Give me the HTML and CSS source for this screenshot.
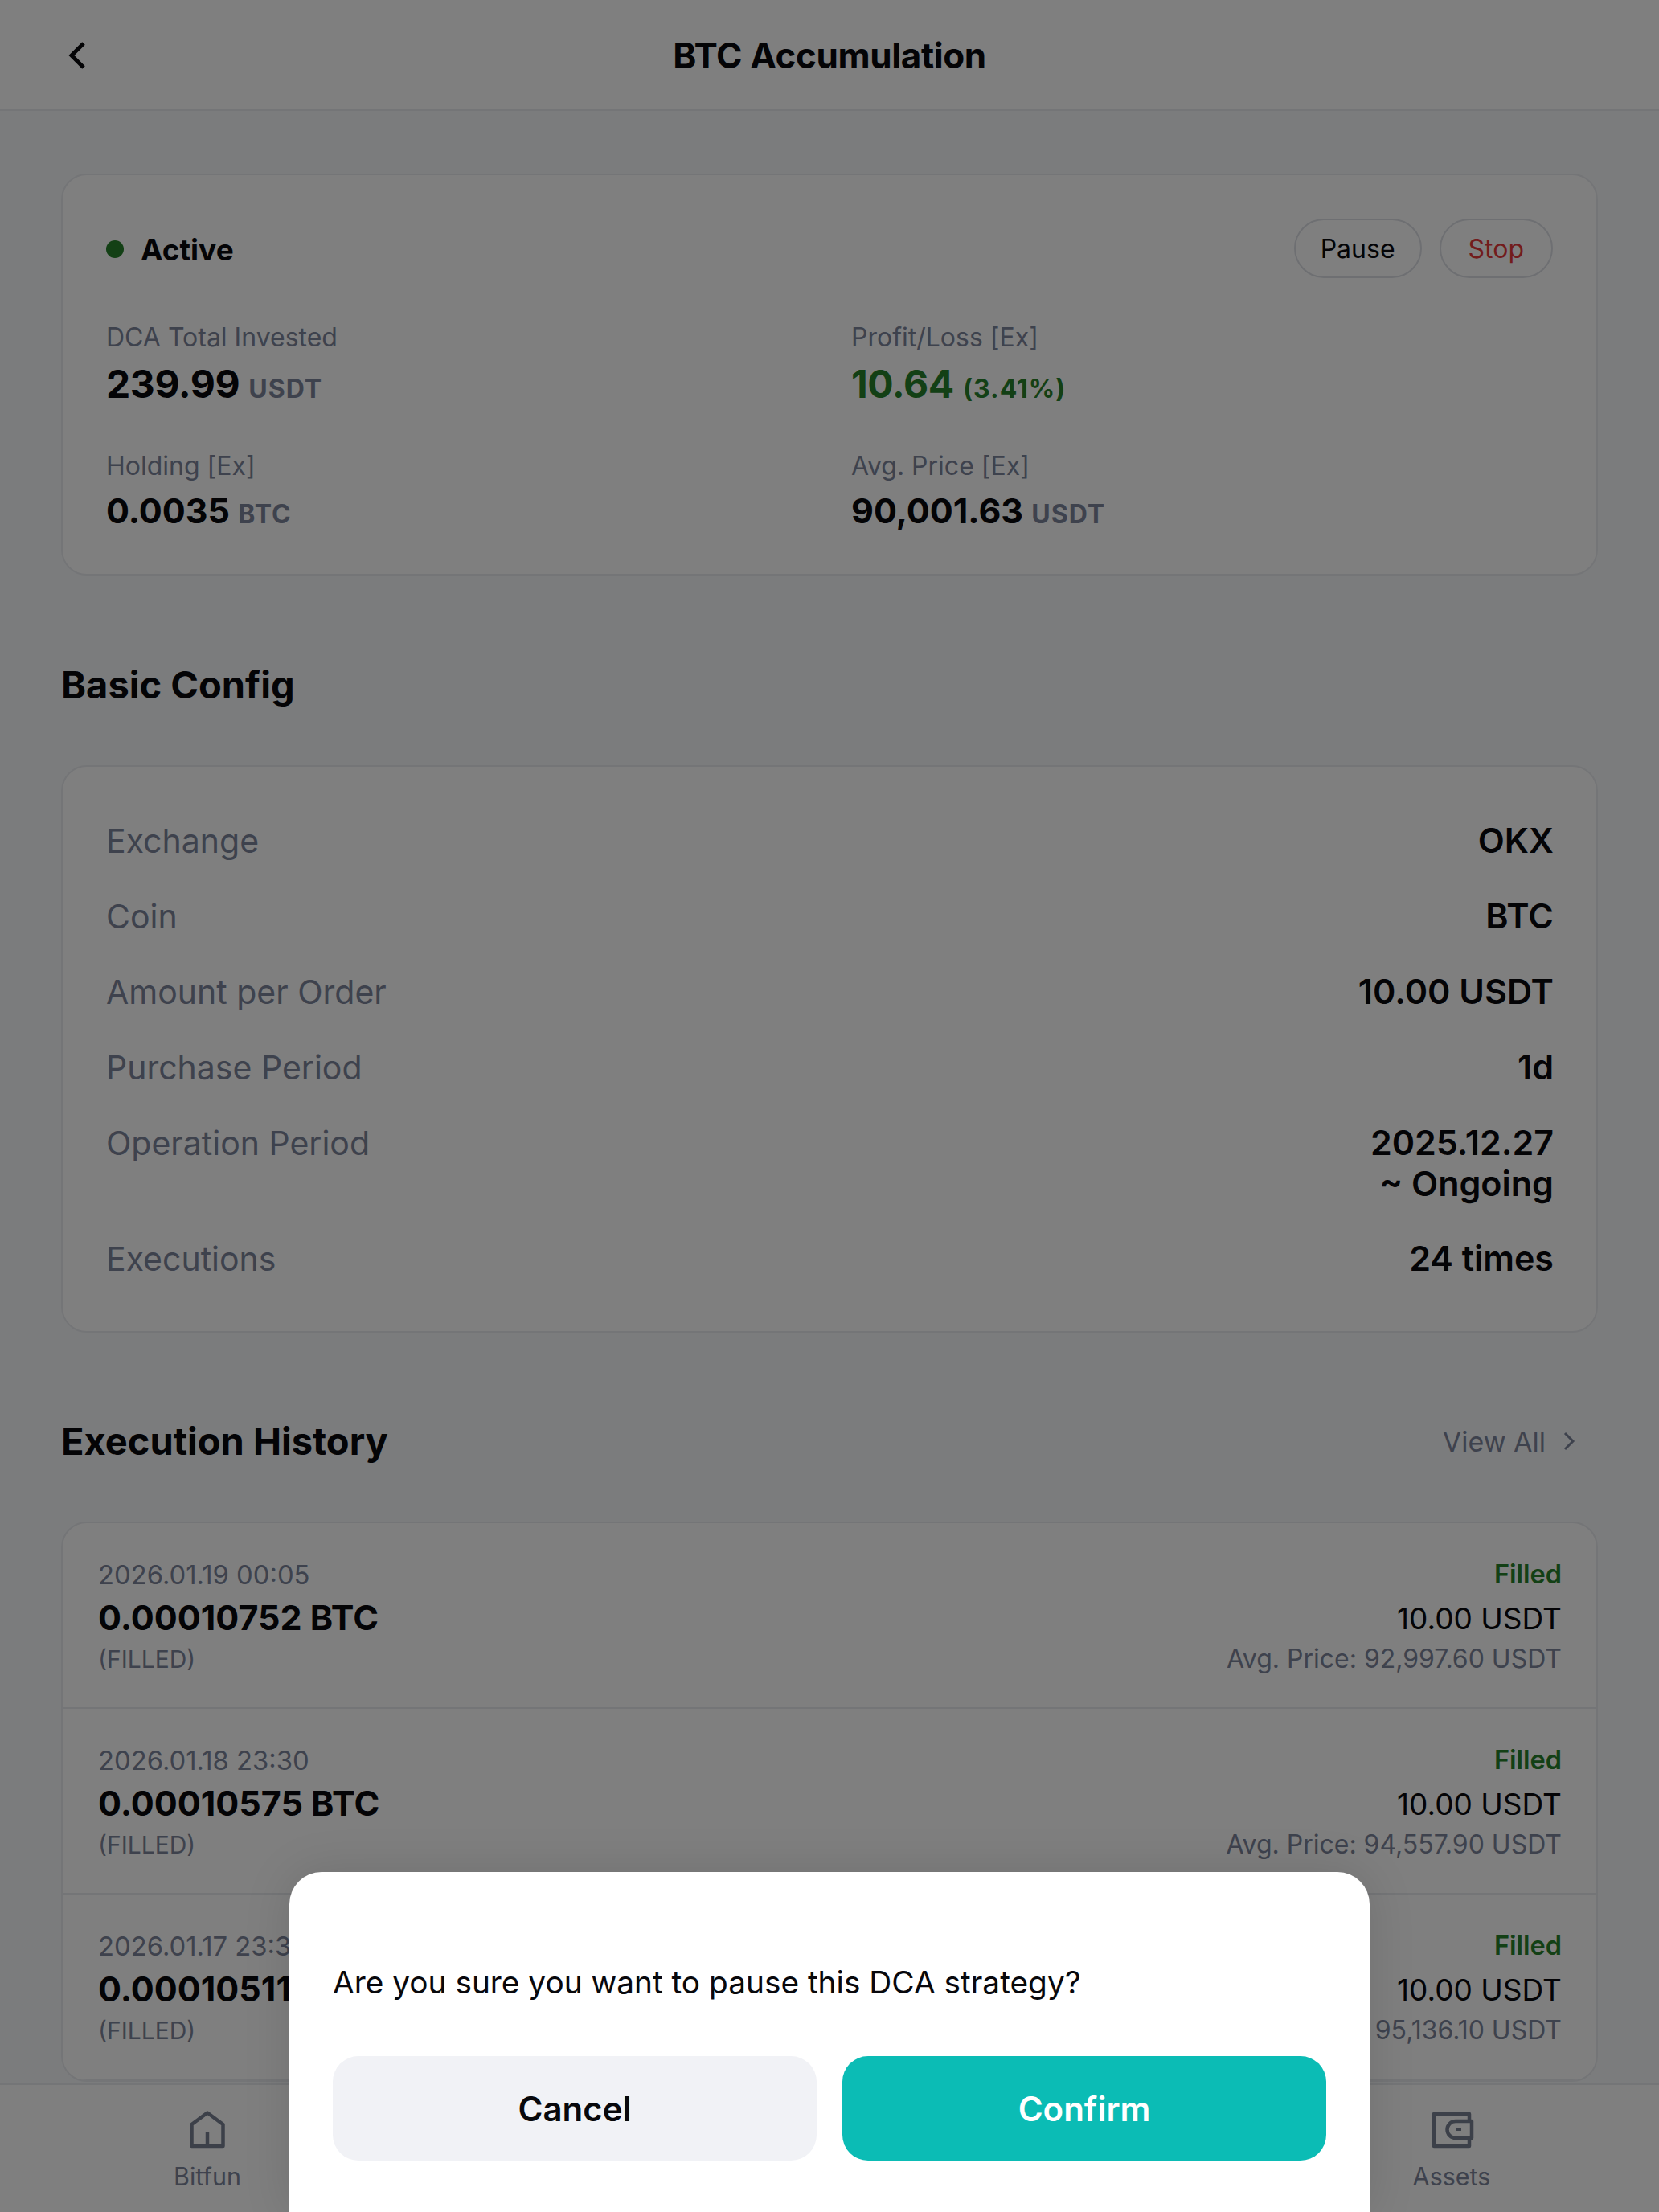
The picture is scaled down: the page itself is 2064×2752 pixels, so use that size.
FILE: index.html
```html
<!DOCTYPE html>
<html lang="en">
<head>
  <meta charset="UTF-8" />
  <title>BTC Accumulation</title>
  <link rel="stylesheet" href="styles.css">
</head>

<body>
  <!-- HEADER -->
  <header class="topbar">
    <svg class="back-icon" viewBox="0 0 24 36" fill="none"><path d="M20 3 5 18l15 15" /></svg>
    <h1>BTC Accumulation</h1>
  </header>

  <main class="content">
    <!-- SUMMARY -->
    <section class="card summary">
      <div class="summary-head">
        <div class="status"><span class="dot"></span>Active</div>
        <div class="pill-group">
          <button class="pill">Pause</button>
          <button class="pill pill-stop">Stop</button>
        </div>
      </div>
      <div class="stats">
        <div class="stat">
          <p class="stat-label">DCA Total Invested</p>
          <p class="stat-value big">239.99 <span class="unit">USDT</span></p>
        </div>
        <div class="stat">
          <p class="stat-label">Profit/Loss [Ex]</p>
          <p class="stat-value big green">10.64 <span class="unit green">(3.41%)</span></p>
        </div>
        <div class="stat">
          <p class="stat-label">Holding [Ex]</p>
          <p class="stat-value">0.0035 <span class="unit">BTC</span></p>
        </div>
        <div class="stat">
          <p class="stat-label">Avg. Price [Ex]</p>
          <p class="stat-value">90,001.63 <span class="unit">USDT</span></p>
        </div>
      </div>
    </section>

    <!-- BASIC CONFIG -->
    <h2 class="section-title config-title">Basic Config</h2>
    <section class="card config">
      <div class="config-row"><span>Exchange</span><strong>OKX</strong></div>
      <div class="config-row"><span>Coin</span><strong>BTC</strong></div>
      <div class="config-row"><span>Amount per Order</span><strong>10.00 USDT</strong></div>
      <div class="config-row"><span>Purchase Period</span><strong>1d</strong></div>
      <div class="config-row"><span>Operation Period</span><strong>2025.12.27<br>~ Ongoing</strong></div>
      <div class="config-row"><span>Executions</span><strong>24 times</strong></div>
    </section>

    <!-- HISTORY -->
    <div class="history-head">
      <h2 class="section-title">Execution History</h2>
      <a class="view-all" href="#">View All
        <svg viewBox="0 0 16 24" fill="none"><path d="M3 2l10 10-10 10" /></svg>
      </a>
    </div>
    <section class="card history">
      <div class="history-row">
        <div>
          <p class="date">2026.01.19 00:05</p>
          <p class="amount">0.00010752 BTC</p>
          <p class="state">(FILLED)</p>
        </div>
        <div class="history-right">
          <p class="filled">Filled</p>
          <p class="spent">10.00 USDT</p>
          <p class="avg">Avg. Price: 92,997.60 USDT</p>
        </div>
      </div>
      <div class="history-row">
        <div>
          <p class="date">2026.01.18 23:30</p>
          <p class="amount">0.00010575 BTC</p>
          <p class="state">(FILLED)</p>
        </div>
        <div class="history-right">
          <p class="filled">Filled</p>
          <p class="spent">10.00 USDT</p>
          <p class="avg">Avg. Price: 94,557.90 USDT</p>
        </div>
      </div>
      <div class="history-row">
        <div>
          <p class="date">2026.01.17 23:30</p>
          <p class="amount">0.00010511 BTC</p>
          <p class="state">(FILLED)</p>
        </div>
        <div class="history-right">
          <p class="filled">Filled</p>
          <p class="spent">10.00 USDT</p>
          <p class="avg">Avg. Price: 95,136.10 USDT</p>
        </div>
      </div>
    </section>
  </main>

  <!-- TAB BAR -->
  <nav class="tabbar">
    <div class="tab">
      <svg viewBox="0 0 80 80" fill="none">
        <path d="M40 18.5 20.5 33v27h39V33z" />
        <path d="M40 43v17" />
      </svg>
      <span>Bitfun</span>
    </div>
    <div class="tab"></div>
    <div class="tab"></div>
    <div class="tab">
      <svg viewBox="0 0 80 80" fill="none">
        <path d="M62 27v-7H18v40h44v-8" />
        <path d="M65 29H45a10.500 10.500 0 0 0 0 21h20z" />
        <rect class="solid" x="45" y="37" width="7" height="4" />
      </svg>
      <span>Assets</span>
    </div>
  </nav>

  <!-- DIALOG -->
  <div class="backdrop"></div>
  <div class="dialog">
    <p>Are you sure you want to pause this DCA strategy?</p>
    <div class="dialog-actions">
      <button class="btn btn-cancel">Cancel</button>
      <button class="btn btn-confirm">Confirm</button>
    </div>
  </div>
</body>
</html>
```

FILE: styles.css
```css
* {
  box-sizing: border-box;
}

html,
body {
  height: 2752px;
}

body {
  margin: 0;
  position: relative;
  display: flex;
  flex-direction: column;
  overflow: hidden;
  font-family: Inter, "Noto Sans", sans-serif;
  background: #f7f9fb;
  color: #08080c;
}

p,
h1,
h2 {
  margin: 0;
}

/* HEADER */
.topbar {
  flex: none;
  height: 138px;
  padding-top: 2px;
  display: flex;
  align-items: center;
  justify-content: center;
  position: relative;
  background: #fff;
  border-bottom: 2px solid #e8eaee;
}

.topbar h1 {
  font-size: 44px;
  font-weight: 700;
  letter-spacing: -0.4px;
}

.back-icon {
  position: absolute;
  left: 84px;
  top: 51px;
  width: 24px;
  height: 36px;
}

.back-icon path {
  stroke: #08080c;
  stroke-width: 5;
}

/* CONTENT */
.content {
  flex: 1;
  min-height: 0;
  overflow: hidden;
  padding: 78px 76px 0;
}

.card {
  background: #fff;
  border: 2px solid #e8eaee;
  border-radius: 32px;
}

.summary {
  height: 500px;
  padding: 54px 54px 0;
}

.summary-head {
  display: flex;
  align-items: center;
  justify-content: space-between;
  height: 74px;
}

.status {
  display: flex;
  align-items: center;
  gap: 21px;
  padding-top: 2px;
  font-size: 37px;
  font-weight: 700;
}

.dot {
  width: 22px;
  height: 22px;
  border-radius: 50%;
  background: #26802b;
}

.pill-group {
  display: flex;
  gap: 22px;
}

.pill {
  height: 74px;
  padding: 0 31px;
  border: 2px solid #dcdfe5;
  border-radius: 37px;
  background: #fff;
  font: 400 32px Inter, sans-serif;
  color: #08080c;
}

.pill-stop {
  padding: 0 34px;
  color: #e5393b;
}

.stats {
  display: grid;
  grid-template-columns: 927px 1fr;
  row-gap: 39px;
  margin-top: 53px;
}

.stat-label {
  font-size: 32px;
  line-height: 42px;
  color: #7d859b;
}

.stat-value {
  font-size: 43px;
  line-height: 69px;
  font-weight: 700;
}

.stat-value.big {
  font-size: 48px;
  line-height: 73px;
  letter-spacing: -0.4px;
}

.unit {
  font-size: 32px;
  font-weight: 700;
  letter-spacing: 1px;
  color: #7d859b;
}

.green,
.filled,
.unit.green {
  color: #26802b;
}

/* CONFIG */
.section-title {
  font-size: 47px;
  font-weight: 700;
  line-height: 64px;
}

.config-title {
  margin: 104px 0 68px;
}

.config {
  height: 706px;
  padding: 66px 53px 0 54px;
}

.config-row {
  display: flex;
  justify-content: space-between;
  font-size: 41px;
  line-height: 52px;
  margin-bottom: 42px;
  color: #7d859b;
}

.config-row strong {
  font-weight: 600;
  font-size: 43px;
  line-height: 51px;
  color: #08080c;
  text-align: right;
}

/* HISTORY */
.history-head {
  display: flex;
  align-items: center;
  justify-content: space-between;
  margin: 103px 0 68px;
}

.view-all {
  display: flex;
  align-items: center;
  gap: 21px;
  margin-right: 28px;
  font-size: 34px;
  color: #7d859b;
  text-decoration: none;
}

.view-all svg {
  width: 16px;
  height: 24px;
}

.view-all path {
  stroke: #7d859b;
  stroke-width: 3;
}

.history {
  overflow: hidden;
}

.history-row {
  height: 231px;
  padding: 42px 43px 0 44px;
  display: flex;
  justify-content: space-between;
  border-bottom: 2px solid #e8eaee;
}

.date {
  font-size: 32.800px;
  line-height: 44px;
  color: #7d859b;
}

.amount {
  font-size: 43px;
  line-height: 62px;
  font-weight: 700;
}

.state {
  font-size: 30px;
  line-height: 42px;
  color: #7d859b;
}

.history-right {
  text-align: right;
}

.filled {
  font-size: 32.500px;
  line-height: 44px;
  font-weight: 600;
}

.spent {
  font-size: 37px;
  line-height: 66px;
}

.avg {
  font-size: 32px;
  line-height: 34px;
  color: #7d859b;
}

/* TAB BAR */
.tabbar {
  flex: none;
  height: 160px;
  display: grid;
  grid-template-columns: repeat(4, 1fr);
  background: #fff;
  border-top: 2px solid #e8eaee;
}

.tab {
  display: flex;
  flex-direction: column;
  align-items: center;
  padding-top: 16px;
  font-size: 30.500px;
  line-height: 36px;
  color: #7d859b;
}

.tab svg {
  width: 80px;
  height: 80px;
}

.tab path {
  stroke: #788092;
  stroke-width: 4.500;
  stroke-linejoin: round;
}

.tab .solid {
  fill: #788092;
}

/* DIALOG */
.backdrop {
  position: absolute;
  inset: 0;
  background: rgba(0, 0, 0, 0.5);
}

.dialog {
  position: absolute;
  left: 360px;
  top: 2329px;
  width: 1344px;
  height: 423px;
  padding: 110px 54px 0;
  background: #fff;
  border-radius: 40px 40px 0 0;
  box-shadow: 0 0 60px rgba(0, 0, 0, 0.12);
}

.dialog p {
  font-size: 38.800px;
  line-height: 54px;
  color: #08080c;
}

.dialog-actions {
  display: flex;
  gap: 32px;
  margin-top: 65px;
}

.btn {
  flex: 1;
  height: 130px;
  border: 0;
  border-radius: 32px;
  font: 600 42px Inter, sans-serif;
}

.btn-cancel {
  background: #f1f2f6;
  color: #08080c;
}

.btn-confirm {
  background: #0bbcb5;
  color: #fff;
}
```
